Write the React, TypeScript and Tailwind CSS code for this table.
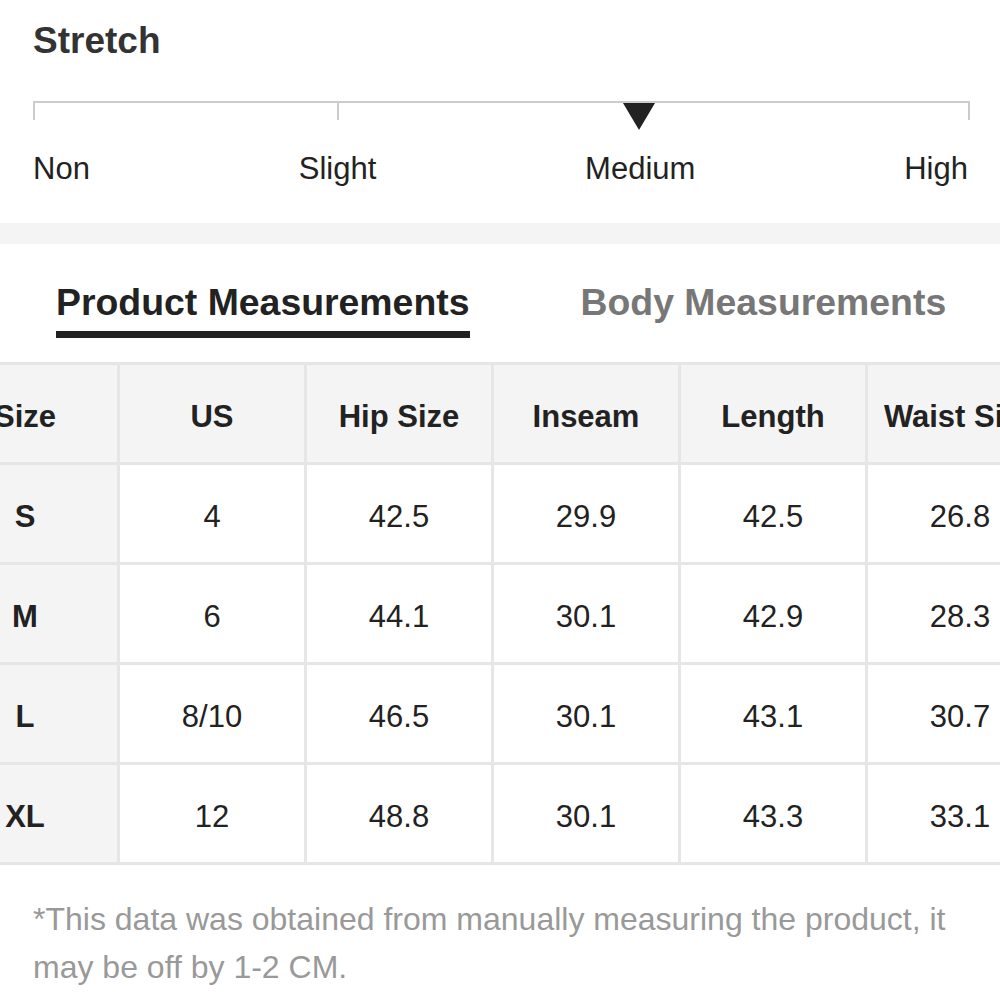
const headers = ["Size", "US", "Hip Size", "Inseam", "Length", "Waist Size"];

const rows = [
  ["S", "4", "42.5", "29.9", "42.5", "26.8"],
  ["M", "6", "44.1", "30.1", "42.9", "28.3"],
  ["L", "8/10", "46.5", "30.1", "43.1", "30.7"],
  ["XL", "12", "48.8", "30.1", "43.3", "33.1"],
];

const stretchLabels = ["Non", "Slight", "Medium", "High"];

function StretchScale() {
  // the scale line with its ticks and the marker on "Medium"
  return (
    <svg width="937" height="30" viewBox="0 0 937 30" className="block">
      <path d="M1 19V1H936V19" fill="none" stroke="#cccccc" strokeWidth="2" />
      <path d="M305 1V19" fill="none" stroke="#cccccc" strokeWidth="2" />
      <path d="M590 2H622L606 29Z" fill="#222222" />
    </svg>
  );
}

export default function App() {
  return (
    <div className="w-[1000px] h-[1000px] overflow-hidden bg-white text-[#222] font-['Liberation_Sans',Arial,sans-serif]">
      {/* Stretch */}
      <div className="px-[33px] pt-[22px]">
        <h2 className="text-[37px] leading-none font-bold text-[#333]">Stretch</h2>
        <div className="mt-[42px]">
          <StretchScale />
        </div>
        <div className="mt-[22px] w-[935px] flex justify-between text-[31px] leading-none">
          {stretchLabels.map((label) => (
            <span key={label}>{label}</span>
          ))}
        </div>
      </div>

      <div className="mt-[39px] h-[21px] bg-[#f4f4f4]" />

      {/* tabs */}
      <div className="mt-[40px] flex gap-[111px] pl-[56px]">
        <div className="flex flex-col">
          <span className="text-[37.4px] leading-none font-bold text-[#222]">
            Product Measurements
          </span>
          <div className="mt-[10px] h-[7px] bg-[#222]" />
        </div>
        <span className="text-[37.4px] leading-none font-bold text-[#777]">
          Body Measurements
        </span>
      </div>

      {/* table, scrolled a bit to the right */}
      <div className="mt-[24px] overflow-hidden">
        <div className="ml-[-67px] w-[1200px] grid grid-cols-[repeat(6,184px)] gap-[3px] py-[3px] bg-[#e6e6e6]">
          {headers.map((h) => (
            <div
              key={h}
              className="h-[97px] pt-[7px] flex items-center justify-center bg-[#f4f4f4] text-[31px] font-bold whitespace-nowrap"
            >
              {h}
            </div>
          ))}
          {rows.map((row) =>
            row.map((cell, i) => (
              <div
                key={row[0] + i}
                className={
                  i === 0
                    ? "h-[97px] pt-[7px] flex items-center justify-center bg-[#f4f4f4] text-[31px] font-bold"
                    : "h-[97px] pt-[7px] flex items-center justify-center bg-white text-[31px]"
                }
              >
                {cell}
              </div>
            ))
          )}
        </div>
      </div>

      <p className="mt-[30px] px-[33px] text-[32px] leading-[48px] text-[#999]">
        *This data was obtained from manually measuring the product, it may be off by 1-2 CM.
      </p>
    </div>
  );
}
